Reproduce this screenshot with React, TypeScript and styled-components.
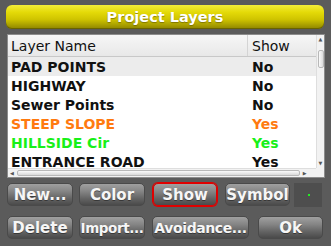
import React from "react";
import styled, { createGlobalStyle } from "styled-components";

const Global = createGlobalStyle`
  html, body { margin: 0; padding: 0; background: #5b5b5b; }
  body { font-family: "DejaVu Sans", "Liberation Sans", sans-serif; }
  * { box-sizing: border-box; }
`;

const Screen = styled.div`
  width: 331px;
  height: 246px;
  background: #5b5b5b;
  padding: 5px 6px 0 7px;
  display: flex;
  flex-direction: column;
  overflow: hidden;
`;

const TitleBar = styled.div`
  height: 24px;
  margin-left: -1px;
  margin-right: 1px;
  border-radius: 6px;
  background: linear-gradient(#f4ee3a 0%, #e4da08 30%, #cfc400 60%, #8d8400 100%);
  box-shadow: inset 0 -1px 0 #6a6300;
  display: flex;
  align-items: center;
  justify-content: center;
  color: #ffffff;
  font-weight: bold;
  font-size: 14.5px;
  text-shadow: 0 1px 1px rgba(90, 80, 0, 0.6);
`;

const TableBox = styled.div`
  margin-top: 5px;
  height: 144px;
  background: #ffffff;
  border: 1px solid #8c8c8c;
  display: grid;
  grid-template-columns: 1fr 8px;
  grid-template-rows: 1fr 9px;
  overflow: hidden;
`;

const Body = styled.div`
  overflow: hidden;
  display: flex;
  flex-direction: column;
`;

const Row = styled.div<{ $header?: boolean; $shade?: boolean; $color?: string }>`
  display: grid;
  grid-template-columns: 240px 1fr;
  flex: none;
  height: ${(p) => (p.$header ? "22px" : "19px")};
  align-items: center;
  font-size: 14px;
  font-weight: ${(p) => (p.$header ? "normal" : "bold")};
  color: ${(p) => p.$color ?? "#111111"};
  background: ${(p) =>
    p.$header
      ? "linear-gradient(#f6f6f6, #e8e8e8)"
      : p.$shade
      ? "#ececec"
      : "#ffffff"};
  border-bottom: ${(p) => (p.$header ? "1px solid #c8c8c8" : "none")};
  white-space: nowrap;
`;

const Cell = styled.div<{ $divider?: boolean; $first?: boolean }>`
  padding-left: ${(p) => (p.$first ? "3px" : "4px")};
  height: 100%;
  display: flex;
  align-items: center;
  border-right: ${(p) => (p.$divider ? "1px solid #d4d4d4" : "none")};
  overflow: hidden;
`;

const VScroll = styled.div`
  background: #f2f2f2;
  border-left: 1px solid #dedede;
  display: flex;
  flex-direction: column;
  align-items: center;
  justify-content: space-between;
  padding: 1px 0 2px;
  position: relative;
`;

const Arrow = styled.span`
  font-size: 5px;
  line-height: 6px;
  color: #555555;
`;

const VThumb = styled.div`
  position: absolute;
  top: 15px;
  left: 1px;
  width: 6px;
  height: 18px;
  border: 1px solid #b8b8b8;
  border-radius: 2px;
  background: linear-gradient(90deg, #fafafa, #dcdcdc);
`;

const HScroll = styled.div`
  background: #f2f2f2;
  border-top: 1px solid #dedede;
  display: flex;
  align-items: center;
  padding: 0 3px 0 2px;
  gap: 3px;
`;

const HThumb = styled.div`
  flex: none;
  width: 283px;
  height: 6px;
  border: 1px solid #b8b8b8;
  border-radius: 2px;
  background: linear-gradient(#fafafa, #d8d8d8);
`;

const Corner = styled.div`
  background: #f2f2f2;
`;

const ButtonArea = styled.div`
  margin-top: 5px;
  display: flex;
  flex-direction: column;
  gap: 10px;
`;

const ButtonRow = styled.div`
  display: flex;
  align-items: flex-start;
  height: 23px;
`;

const Btn = styled.button<{ $w: number; $ml: number; $active?: boolean; $fs?: number }>`
  flex: none;
  width: ${(p) => p.$w}px;
  height: 23px;
  margin-left: ${(p) => p.$ml}px;
  padding: 0;
  border-radius: 5px;
  border: ${(p) => (p.$active ? "1px solid #e00000" : "1px solid #4a4a4a")};
  box-shadow: ${(p) => (p.$active ? "0 0 0 1px #e00000" : "none")};
  background: linear-gradient(#a0a0a0 0%, #858585 35%, #636363 70%, #4a4a4a 100%);
  color: #f6f6f6;
  font-family: "DejaVu Sans", "Liberation Sans", sans-serif;
  font-weight: bold;
  font-size: ${(p) => p.$fs ?? 15}px;
  letter-spacing: ${(p) => (p.$fs ? "-0.4px" : "0")};
  white-space: nowrap;
  text-shadow: 0 1px 0 rgba(40, 40, 40, 0.7);
  display: flex;
  align-items: center;
  justify-content: center;
  overflow: visible;
`;

const Swatch = styled.div`
  flex: none;
  margin-left: 4px;
  width: 28px;
  height: 24px;
  background: #4e4e4e;
  display: flex;
  align-items: center;
  justify-content: center;
`;

const Dot = styled.div`
  width: 2px;
  height: 2px;
  background: #22ee22;
  margin-left: 1px;
`;

const rows: { name: string; show: string; color?: string }[] = [
  { name: "PAD POINTS", show: "No" },
  { name: "HIGHWAY", show: "No" },
  { name: "Sewer Points", show: "No" },
  { name: "STEEP SLOPE", show: "Yes", color: "#ff7a10" },
  { name: "HILLSIDE Cir", show: "Yes", color: "#18f018" },
  { name: "ENTRANCE ROAD", show: "Yes" },
];

export default function App() {
  return (
    <Screen>
      <Global />
      <TitleBar>Project Layers</TitleBar>
      <TableBox>
        <Body>
          <Row $header>
            <Cell $first $divider>Layer Name</Cell>
            <Cell>Show</Cell>
          </Row>
          {rows.map((r, i) => (
            <Row key={r.name} $shade={i === 0} $color={r.color}>
              <Cell $first>{r.name}</Cell>
              <Cell>{r.show}</Cell>
            </Row>
          ))}
        </Body>
        <VScroll>
          <Arrow>▲</Arrow>
          <VThumb />
          <Arrow>▼</Arrow>
        </VScroll>
        <HScroll>
          <Arrow>◀</Arrow>
          <HThumb />
          <Arrow>▶</Arrow>
        </HScroll>
        <Corner />
      </TableBox>
      <ButtonArea>
        <ButtonRow>
          <Btn $w={66} $ml={0}>New...</Btn>
          <Btn $w={66} $ml={6}>Color</Btn>
          <Btn $w={64} $ml={8} $active>Show</Btn>
          <Btn $w={65} $ml={8}>Symbol</Btn>
          <Swatch>
            <Dot />
          </Swatch>
        </ButtonRow>
        <ButtonRow>
          <Btn $w={66} $ml={0}>Delete</Btn>
          <Btn $w={66} $ml={6} $fs={13.5}>Import...</Btn>
          <Btn $w={97} $ml={7} $fs={14}>Avoidance...</Btn>
          <Btn $w={65} $ml={9}>Ok</Btn>
        </ButtonRow>
      </ButtonArea>
    </Screen>
  );
}
